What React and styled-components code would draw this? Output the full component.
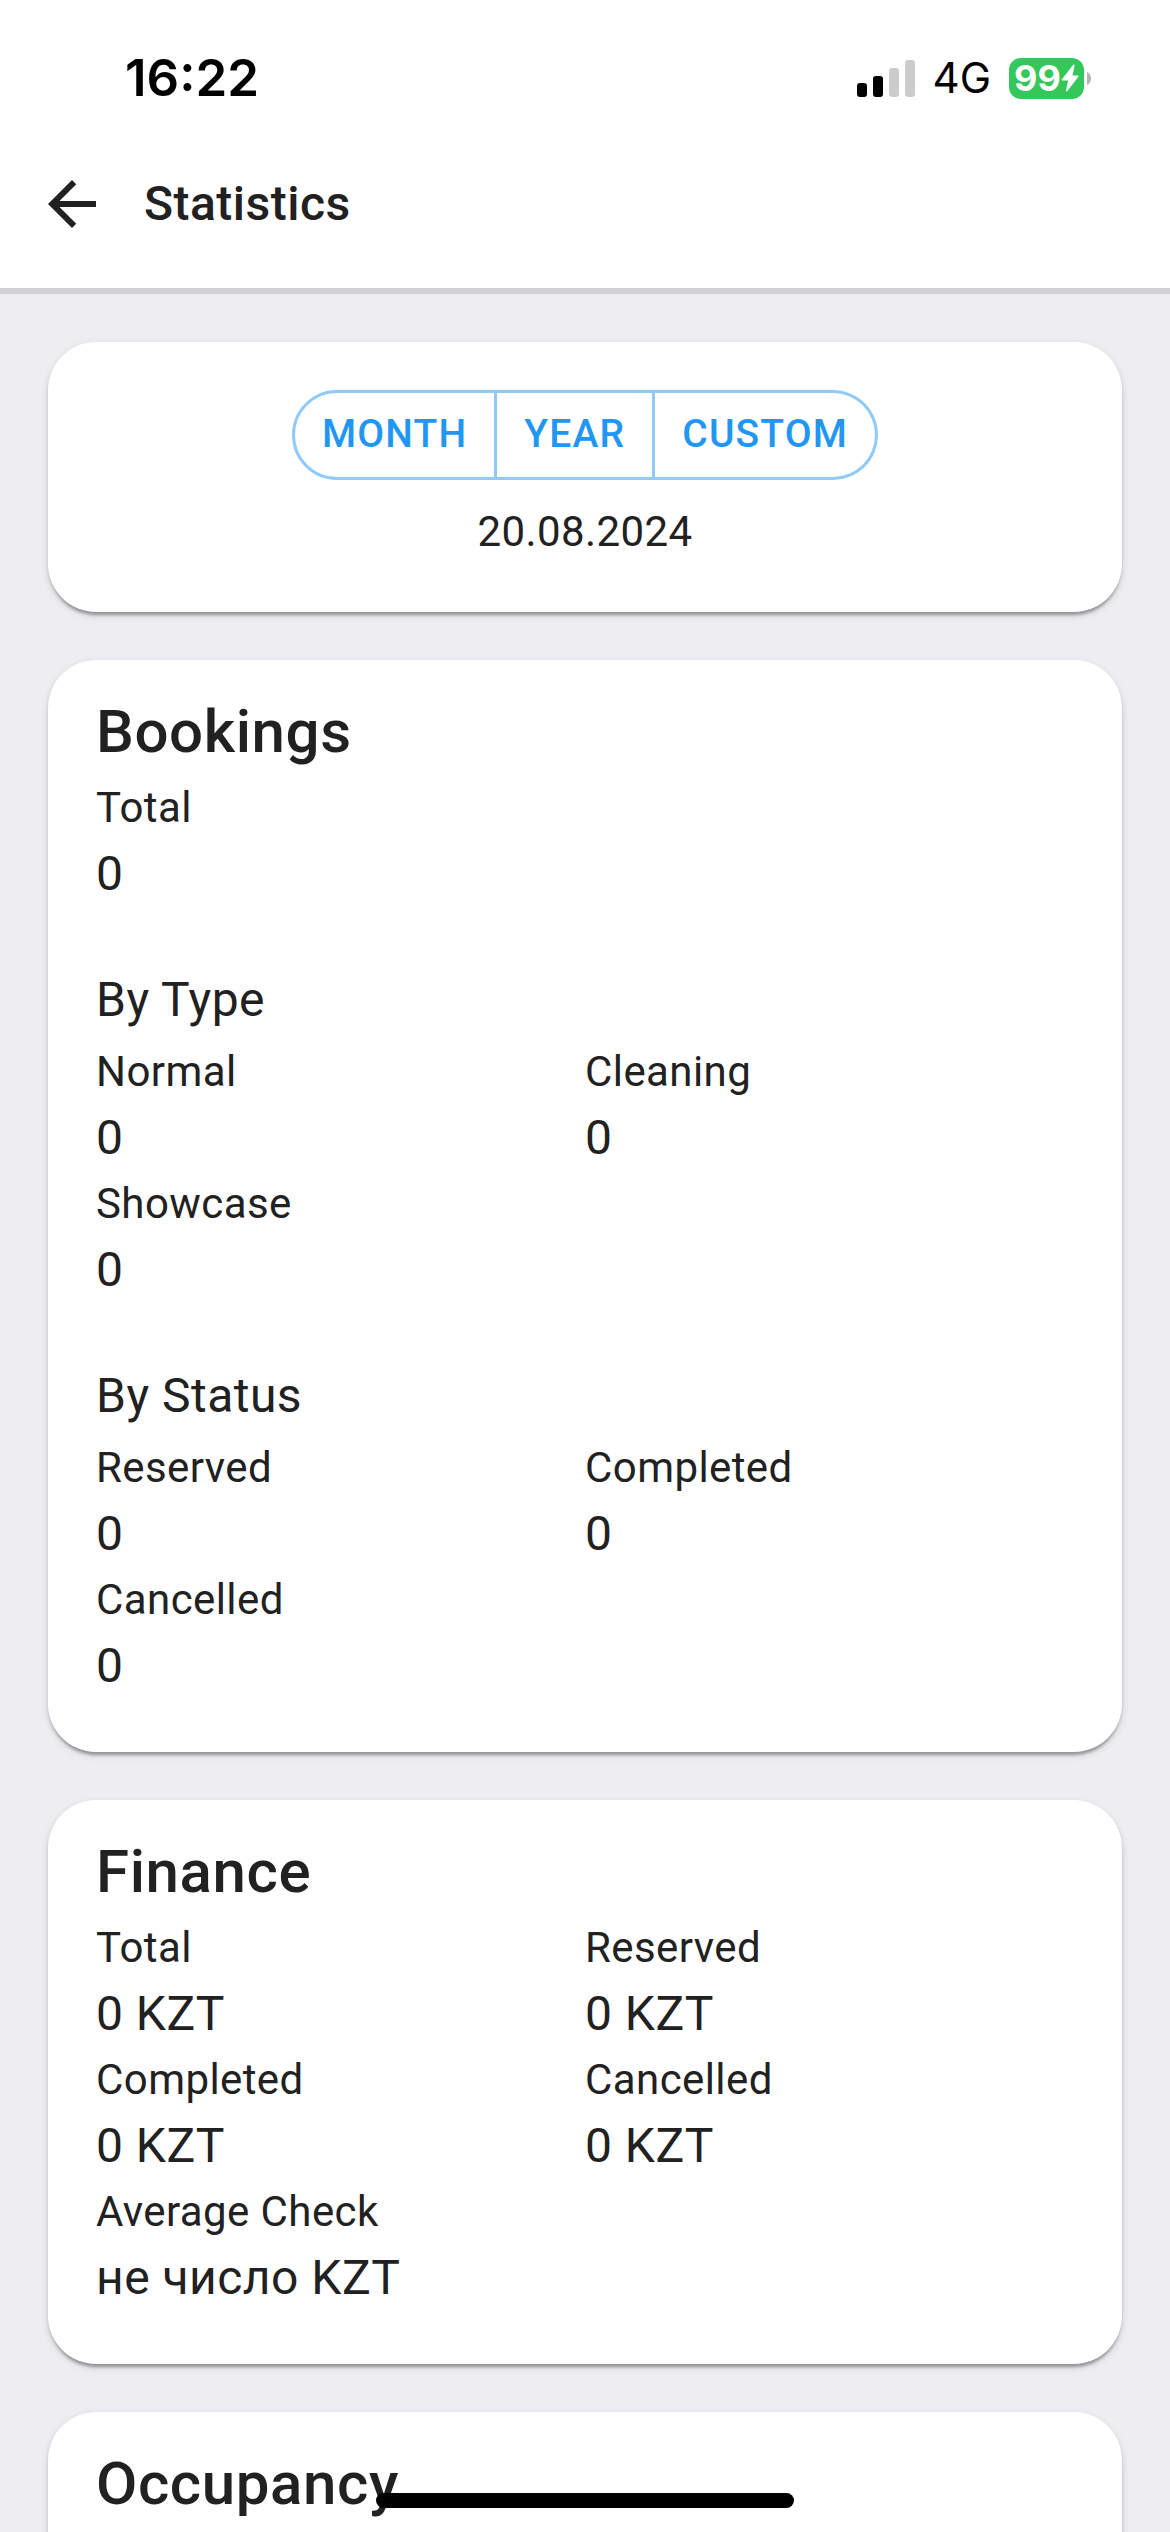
import styled, { createGlobalStyle } from 'styled-components';

const bookings = [{ label: 'Total', value: '0' }];

const bookingsByType = [
  { label: 'Normal', value: '0' },
  { label: 'Cleaning', value: '0' },
  { label: 'Showcase', value: '0' },
];

const bookingsByStatus = [
  { label: 'Reserved', value: '0' },
  { label: 'Completed', value: '0' },
  { label: 'Cancelled', value: '0' },
];

const finance = [
  { label: 'Total', value: '0 KZT' },
  { label: 'Reserved', value: '0 KZT' },
  { label: 'Completed', value: '0 KZT' },
  { label: 'Cancelled', value: '0 KZT' },
  { label: 'Average Check', value: 'не число KZT' },
];

function StatusBar() {
  return (
    <StatusRow>
      <Time>16:22</Time>
      <StatusIcons>
        <svg width="58" height="38" viewBox="0 0 58 38" aria-hidden="true">
          <rect x="0" y="24" width="10" height="14" rx="3" fill="#000" />
          <rect x="16" y="17" width="10" height="21" rx="3" fill="#000" />
          <rect x="32" y="9" width="10" height="29" rx="3" fill="#ccc" />
          <rect x="48" y="1" width="10" height="37" rx="3" fill="#ccc" />
        </svg>
        <Network>4G</Network>
        <Battery>
          <BatteryBody>
            99
            <svg width="18" height="28" viewBox="0 0 18 28" aria-hidden="true">
              <path
                d="M12 1 1 15.2c-.5.7-.2 1.3.6 1.3h5.6L5 26c-.3 1.3.8 1.7 1.6.7L17.4 12.8c.5-.7.2-1.3-.6-1.3h-5.3L13.5 2C13.8.6 12.8 0 12 1Z"
                fill="#fff"
              />
            </svg>
          </BatteryBody>
          <svg width="4" height="13" viewBox="0 0 4 13" aria-hidden="true">
            <path d="M0 0c2.5 1 4 3.500 4 6.500S2.500 12 0 13Z" fill="#b5b5b5" />
          </svg>
        </Battery>
      </StatusIcons>
    </StatusRow>
  );
}

function Stats({ items }) {
  return (
    <StatGrid>
      {items.map(({ label, value }) => (
        <div key={label}>
          <Label>{label}</Label>
          <Value>{value}</Value>
        </div>
      ))}
    </StatGrid>
  );
}

export default function App() {
  return (
    <>
      <GlobalStyle />
      <Screen>
        <StatusBar />
        <Header>
          <BackButton type="button" aria-label="Back">
            <svg width="72" height="72" viewBox="0 0 24 24" fill="currentColor">
              <path d="M20 11H7.83l5.59-5.59L12 4l-8 8 8 8 1.41-1.41L7.83 13H20v-2z" />
            </svg>
          </BackButton>
          <PageTitle>Statistics</PageTitle>
        </Header>

        <Content>
          <PeriodCard>
            <ButtonGroup>
              <PeriodButton type="button">MONTH</PeriodButton>
              <PeriodButton type="button">YEAR</PeriodButton>
              <PeriodButton type="button">CUSTOM</PeriodButton>
            </ButtonGroup>
            <PeriodDate>20.08.2024</PeriodDate>
          </PeriodCard>

          <Card>
            <CardTitle>Bookings</CardTitle>
            <Stats items={bookings} />
            <Subtitle>By Type</Subtitle>
            <Stats items={bookingsByType} />
            <Subtitle>By Status</Subtitle>
            <Stats items={bookingsByStatus} />
          </Card>

          <Card>
            <CardTitle>Finance</CardTitle>
            <Stats items={finance} />
          </Card>

          <Card>
            <CardTitle>Occupancy</CardTitle>
          </Card>
        </Content>
        <HomeIndicator />
      </Screen>
    </>
  );
}

const GlobalStyle = createGlobalStyle`
  * {
    box-sizing: border-box;
  }
  body {
    margin: 0;
    font-family: Roboto, 'Noto Sans', sans-serif;
    color: #212121;
    background: #eeedf2;
  }
  h1, h2, h3, p, dl, dt, dd {
    margin: 0;
    letter-spacing: 0.01em;
  }
  svg {
    display: block;
    flex-shrink: 0;
  }
`;

const Screen = styled.div`
  height: 100vh;
  display: flex;
  flex-direction: column;
  overflow: hidden;
`;

const StatusRow = styled.div`
  flex-shrink: 0;
  height: 120px;
  padding: 36px 79px 0 125px;
  display: flex;
  align-items: center;
  justify-content: space-between;
  background: #fff;
  color: #000;
  font-family: Inter, sans-serif;
`;

const Time = styled.span`
  font-size: 51px;
  font-weight: 600;
  line-height: 60px;
`;

const StatusIcons = styled.div`
  display: flex;
  align-items: center;
  gap: 18px;
`;

const Network = styled.span`
  font-size: 42px;
  line-height: 48px;
`;

const Battery = styled.div`
  display: flex;
  align-items: center;
  gap: 3px;
`;

const BatteryBody = styled.div`
  width: 75px;
  height: 41px;
  display: flex;
  align-items: center;
  justify-content: center;
  border-radius: 12px;
  background: #34c759;
  color: #fff;
  font-size: 36px;
  font-weight: 700;
`;

const Header = styled.header`
  flex-shrink: 0;
  height: 174px;
  display: flex;
  align-items: center;
  background: #fff;
  border-bottom: 6px solid #d1d1d3;
`;

const BackButton = styled.button`
  padding: 36px;
  border: 0;
  background: none;
  color: inherit;
  cursor: pointer;
`;

const PageTitle = styled.h1`
  font-size: 48px;
  font-weight: 500;
  line-height: 72px;
`;

const Content = styled.main`
  flex: 1;
  min-height: 0;
  padding: 48px;
  display: flex;
  flex-direction: column;
  gap: 48px;
  overflow-y: auto;
  scrollbar-width: none;
`;

const Card = styled.section`
  flex-shrink: 0;
  padding: 26px 48px 50px;
  border-radius: 48px;
  background: #fff;
  box-shadow:
    0 6px 3px -3px rgba(0, 0, 0, 0.2),
    0 3px 3px 0 rgba(0, 0, 0, 0.14),
    0 3px 9px 0 rgba(0, 0, 0, 0.12);
`;

const PeriodCard = styled(Card)`
  padding-top: 48px;
  display: flex;
  flex-direction: column;
  align-items: center;
  gap: 22px;
`;

const ButtonGroup = styled.div`
  display: flex;
`;

const PeriodButton = styled.button`
  padding: 8px 27px 10px;
  border: 3px solid #90caf9;
  background: #fff;
  color: #2196f3;
  font-family: inherit;
  font-size: 39px;
  font-weight: 500;
  line-height: 66px;
  letter-spacing: 0.03em;
  cursor: pointer;
  & + & {
    border-left: 0;
  }
  &:first-child {
    border-radius: 48px 0 0 48px;
  }
  &:last-child {
    border-radius: 0 48px 48px 0;
  }
`;

const PeriodDate = styled.p`
  font-size: 42px;
  line-height: 60px;
`;

const CardTitle = styled.h2`
  font-size: 60px;
  font-weight: 500;
  line-height: 92px;
`;

const Subtitle = styled.h3`
  margin-top: 48px;
  font-size: 48px;
  font-weight: 400;
  line-height: 84px;
`;

const StatGrid = styled.dl`
  display: grid;
  grid-template-columns: 1fr 1fr;
`;

const Label = styled.dt`
  font-size: 42px;
  line-height: 60px;
`;

const Value = styled.dd`
  font-size: 48px;
  line-height: 72px;
`;

// sits over the scrolling cards
const HomeIndicator = styled.div`
  position: fixed;
  bottom: 24px;
  left: 50%;
  width: 418px;
  height: 15px;
  border-radius: 8px;
  background: #000;
  transform: translateX(-50%);
`;
